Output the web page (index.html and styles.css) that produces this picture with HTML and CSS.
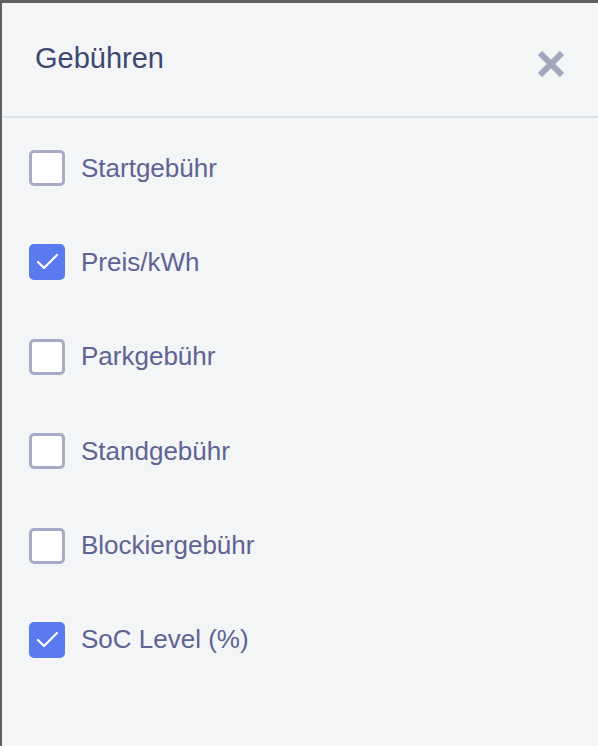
FILE: index.html
```html
<!DOCTYPE html>
<html lang="de">
<head>
    <meta charset="UTF-8">
    <meta name="viewport" content="width=device-width, initial-scale=1.0">
    <title>Gebühren</title>
    <link rel="stylesheet" href="styles.css">
</head>
<body>

<div class="panel">
    <div class="panel-header">
        <h2 class="panel-title">Gebühren</h2>
        <button class="close-btn" type="button" aria-label="Schließen">
            <svg width="26" height="26" viewBox="0 0 26 26">
                <path d="M2 2 L24 24 M24 2 L2 24" stroke="currentColor" stroke-width="6" fill="none"/>
            </svg>
        </button>
    </div>

    <!-- Liste der Gebühren -->
    <ul class="fee-list">
        <li class="fee-item">
            <span class="check"></span>
            <span class="fee-label">Startgebühr</span>
        </li>
        <li class="fee-item">
            <span class="check checked">
                <svg width="36" height="36" viewBox="0 0 36 36"><polyline points="9,18 15,24 28,11" fill="none" stroke="#fff" stroke-width="2.2" stroke-linecap="round" stroke-linejoin="round"/></svg>
            </span>
            <span class="fee-label">Preis/kWh</span>
        </li>
        <li class="fee-item">
            <span class="check"></span>
            <span class="fee-label">Parkgebühr</span>
        </li>
        <li class="fee-item">
            <span class="check"></span>
            <span class="fee-label">Standgebühr</span>
        </li>
        <li class="fee-item">
            <span class="check"></span>
            <span class="fee-label">Blockiergebühr</span>
        </li>
        <li class="fee-item">
            <span class="check checked">
                <svg width="36" height="36" viewBox="0 0 36 36"><polyline points="9,18 15,24 28,11" fill="none" stroke="#fff" stroke-width="2.2" stroke-linecap="round" stroke-linejoin="round"/></svg>
            </span>
            <span class="fee-label">SoC Level (%)</span>
        </li>
    </ul>
</div>

</body>
</html>
```

FILE: styles.css
```css
html, body {
    margin: 0;
    height: 100%;
}
body {
    font-family: 'Liberation Sans', Arial, Helvetica, sans-serif;
    background-color: #f4f5f7;
    box-sizing: border-box;
    border-top: 3px solid #606060;
    border-left: 2px solid #606060;
}
.panel {
    background-color: #f4f5f7;
}
.panel-header {
    display: flex;
    align-items: center;
    justify-content: space-between;
    height: 113px;
    padding: 0 34px 0 33px;
    border-bottom: 2px solid #dfe1eb;
    box-sizing: content-box;
}
.panel-title {
    margin: 0;
    font-size: 29px;
    font-weight: normal;
    color: #3d4872;
    padding-bottom: 2px;
}
.close-btn {
    background: none;
    border: none;
    padding: 0;
    color: #a3a7bd;
    display: flex;
    cursor: pointer;
    margin-top: 8px;
}
.fee-list {
    list-style: none;
    margin: 0;
    padding: 32px 0 0 27px;
    display: flex;
    flex-direction: column;
    gap: 58.4px;
}
.fee-item {
    display: flex;
    align-items: center;
    gap: 16px;
}
.check {
    box-sizing: border-box;
    width: 36px;
    height: 36px;
    border: 3px solid #a7abc5;
    border-radius: 5px;
    background-color: #fff;
    flex-shrink: 0;
}
.check.checked {
    border: none;
    background-color: #5a7bf0;
}
.check svg {
    display: block;
}
.fee-label {
    font-size: 26px;
    color: #5d6493;
}
```
